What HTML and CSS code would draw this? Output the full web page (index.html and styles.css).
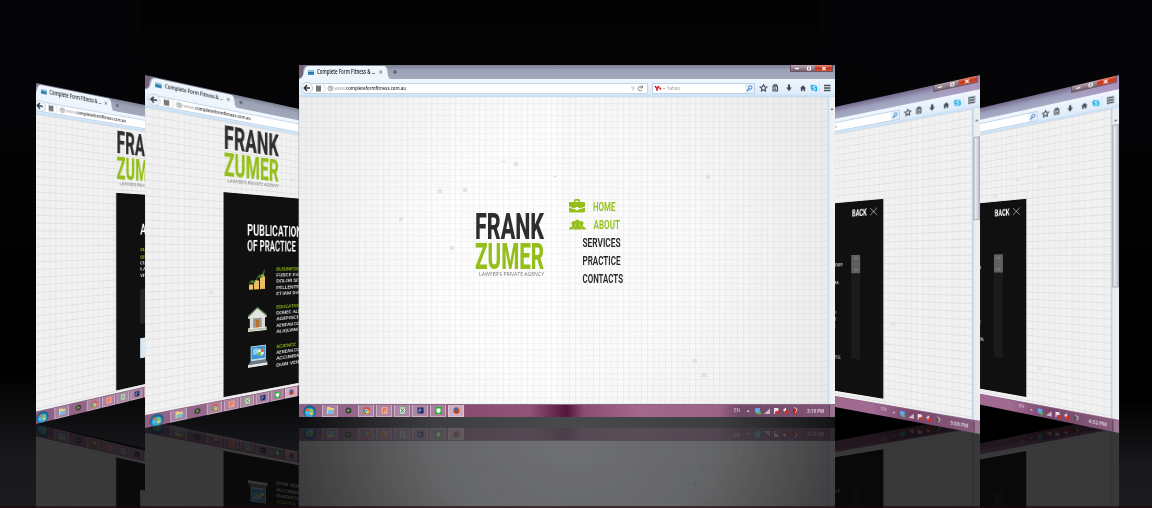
FILE: index.html
```html
<!DOCTYPE html>
<html lang="en">
<head>
<meta charset="utf-8">
<title>Frank Zumer</title>
<link rel="stylesheet" href="styles.css">
</head>
<body>
<main class="stage">
  <svg class="floor" width="1152" height="508" viewBox="0 0 1152 508" aria-hidden="true">
    <defs>
      <radialGradient id="glow" gradientUnits="userSpaceOnUse" cx="0" cy="0" r="1" gradientTransform="translate(575 440) scale(285 210)">
        <stop offset="0" stop-color="#4a4b4e"/><stop offset=".5" stop-color="#3d3e40"/><stop offset="1" stop-color="#0b0b0d"/>
      </radialGradient>
      <linearGradient id="ground" x1="0" y1="0" x2="0" y2="1">
        <stop offset="0" stop-color="#000"/><stop offset=".6" stop-color="#17181a"/><stop offset="1" stop-color="#1b1b1d"/>
      </linearGradient>
    </defs>
    <path d="M0 130 L140 160 V0 H0Z" fill="#050507"/>
    <path d="M820 0 H1152 V146 H1119 L820 60Z" fill="#050507"/>
    <rect y="370" width="300" height="138" fill="url(#ground)"/>
    <rect x="1119" y="400" width="33" height="108" fill="url(#ground)"/>
    <path d="M36 424 L145 448 L299 453 V508 H36Z M145 424 L299 453 V508 H145Z" fill="#09090b"/>
    <path d="M835 450 L980 426 V508 H835Z M980 450 L1119 426 V508 H980Z" fill="#08080a"/>
    <rect x="299" y="400" width="536" height="108" fill="url(#glow)"/>
  </svg>
  <div class="sides">
    <div class="slot far-left" data-view="about"></div>
    <div class="slot near-left" data-view="publications"></div>
    <div class="slot far-right" data-view="back-far"></div>
    <div class="slot near-right" data-view="back-near"></div>
  </div>
  <div class="slot front" data-view="home"></div>
  <div class="baseline"></div>
</main>
<script src="main.js"></script>
</body>
</html>
```
FILE: styles.css
```css
* { box-sizing: border-box; }
body { margin: 0; overflow: hidden; background: #000; font-family: "Open Sans", "Liberation Sans", sans-serif; }
.stage { position: relative; width: 1152px; height: 508px; overflow: hidden; background: linear-gradient(#020203, #050507 60px, #000 330px, #000); }
.floor { position: absolute; left: 0; top: 0; }
.sides { position: absolute; left: 0; top: 0; width: 1152px; height: 424px; -webkit-box-reflect: below 0 linear-gradient(rgba(0,0,0,.21), rgba(0,0,0,.21)); }
.baseline { position: absolute; left: 0; right: 0; bottom: 0; height: 2px; background: rgba(30,5,12,.6); }

/* windows placed around the stage */
.slot { position: absolute; overflow: hidden; height: 352px; display: flex; }
.front { left: 299px; top: 65px; width: 536px; -webkit-box-reflect: below 11px linear-gradient(rgba(0,0,0,.2), rgba(0,0,0,.22)); }
.near-left { left: 145px; top: 75px; width: 167.3px; transform-origin: 0 0; transform: matrix3d(1.133,.25,0,.00138, 0,1.003,0,0, 0,0,1,0, 0,0,0,1); }
.far-left { left: 36px; top: 83px; width: 129.5px; transform-origin: 0 0; transform: matrix3d(.99,.2,0,.0013, 0,.969,0,0, 0,0,1,0, 0,0,0,1); }
.far-left .window { margin-left: -4px; }
.near-right { left: 822.2px; top: 75px; width: 157.8px; justify-content: flex-end; transform-origin: 100% 0; transform: matrix3d(1.1,-.243,0,-.00125, 0,1.02,0,0, 0,0,1,0, 0,0,0,1); }
.far-right { left: 970.4px; top: 74.5px; width: 148.6px; justify-content: flex-end; transform-origin: 100% 0; transform: matrix3d(1.13,-.27,0,-.0014, 0,1.017,0,0, 0,0,1,0, 0,0,0,1); }

.window { flex: none; width: 536px; height: 352px; display: flex; flex-direction: column; background: #eee; }

/* title bar */
.tabs { height: 14px; flex: none; display: flex; align-items: flex-start; justify-content: space-between; background: linear-gradient(#7d8194, #9ca2b5 5px, #a3a9bb); }
.near-right .tabs, .far-right .tabs { background: linear-gradient(90deg, transparent 480px, rgba(176,140,190,.6) 525px), linear-gradient(#75698a, #9c9fbb 7px, #a9adc6); }
.tabs-left { display: flex; height: 14px; align-items: center; }
.tab { height: 14px; width: 91px; position: relative; display: flex; align-items: center; padding-left: 9px; }
.tab-shape { position: absolute; left: 0; top: 0; }
.tab-icon { position: relative; width: 6px; height: 5px; margin-right: 3px; background: linear-gradient(#8cc0dc 40%, #1e6c9c 40%, #4d9ac4); }
.tab svg.label { position: relative; }
.plus { margin-left: 1px; }
.controls { display: flex; height: 7px; margin-right: 2px; border: 1px solid #6a5560; border-top: 0; }
.control { width: 12px; background: linear-gradient(#b9a5b0, #776473); display: flex; align-items: center; justify-content: center; }
.control.close { width: 17px; background: linear-gradient(#e89078, #c5301c 50%, #d9502e); }

/* toolbar */
.toolbar { height: 18px; flex: none; display: flex; align-items: center; background: linear-gradient(#eff6fd, #e0edfa 14px, #c5ddf3); padding-left: 2px; }
.back { flex: none; width: 12px; height: 12px; border-radius: 50%; background: #f6fafd; border: 1px solid #bcd0e2; display: flex; align-items: center; justify-content: center; margin-right: -3px; z-index: 1; }
.url { width: 338px; height: 11px; background: #fff; border: 1px solid #c3d6e8; display: flex; align-items: center; justify-content: space-between; padding: 0 3px 0 4px; }
.url-left { display: flex; align-items: center; }
.search { width: 103px; height: 11px; margin-left: 4px; background: #fff; border: 1px solid #bcd2e8; display: flex; align-items: center; justify-content: space-between; padding-left: 1px; }
.glass { width: 9px; height: 9px; background: #e3effb; display: flex; align-items: center; justify-content: center; }

/* page body */
.view { flex: 1; display: flex; min-height: 0; }
.page { flex: 1; position: relative; overflow: hidden;
  background: linear-gradient(90deg, rgba(90,95,100,.05) 1px, transparent 1px) 0 0 / 6px 6px, linear-gradient(rgba(90,95,100,.05) 1px, transparent 1px) 0 0 / 6px 6px, radial-gradient(circle at 50% 52%, #fff 0, #fcfcfc 130px, #eaeaea 330px); }
.near-left .page, .far-left .page, .near-right .page, .far-right .page {
  background: linear-gradient(90deg, rgba(70,75,80,.045) 1px, transparent 1px) 0 0 / 6px 7px, linear-gradient(rgba(70,75,80,.09) 1px, transparent 1px) 0 0 / 6px 8px, #f1f1f2; }
.canvas { display: block; }
.scroll { width: 7px; background: #ecedef; border-left: 1px solid #a9cfe6; display: flex; flex-direction: column; align-items: center; }
.scroll-thumb { width: 6px; border: 1px solid #adafb9; background: linear-gradient(90deg, #f3f3f6, #c5c6d0); }
.scroll-gap { width: 6px; height: 16px; }
.scroll-near { height: 82px; margin-top: 12px; }
.scroll-far { height: 161px; }
.front .scroll { border-color: #c8dcec; background: linear-gradient(90deg, #dfeffa, #f1f1f2 3px); }

/* taskbar */
.taskbar { height: 13px; flex: none; display: flex; align-items: center; justify-content: space-between; background: linear-gradient(90deg, #8d6285, #9d6e90 120px, #8a4d70 170px, #915377 230px, #55163d 268px, #8c4c73 285px, #a3688c 340px, #9b6287 420px, #704a69 440px, #825577 100%); border-top: 1px solid #8d6886; }
.near-right .taskbar, .far-right .taskbar { background: linear-gradient(90deg, #a16a91 425px, #79476b 470px, #875d80); }
.apps { display: flex; height: 12px; align-items: center; gap: 2px; padding-left: 3px; }
.orb { margin-right: 3px; }
.app { width: 16px; height: 12px; border: 1px solid rgba(235,215,232,.5); border-top: 0; background: rgba(205,175,200,.38); display: flex; align-items: center; justify-content: center; }
.app.plain { background: none; border-color: transparent; }
.app.active { background: rgba(240,220,235,.65); }
```
FILE: main.js
```js
// Condensed lettering: squeezes a word into a fixed width.
function word(x, y, w, size, fill, text, weight = 700, family = 'Roboto, sans-serif') {
  return `<text x="${x}" y="${y}" font-family="${family}" font-size="${size}" font-weight="${weight}" fill="${fill}" textLength="${w}" lengthAdjust="spacingAndGlyphs">${text}</text>`;
}
const sans = '"Open Sans", sans-serif'.replace(/"/g, "'");

function logo(x, y, w) {
  return word(x, y + 25.3, w, 36.5, '#2e2e2e', 'FRANK', 800) +
    word(x, y + 55.5, w, 36.5, '#94bf1a', 'ZUMER', 800) +
    word(x + 4, y + 62.5, w - 4, 5.800, '#77797a', 'LAWYER’S PRIVATE AGENCY', 400, sans);
}

function squares(list) {
  return list.map(([x, y]) => `<rect x="${x}" y="${y}" width="4" height="4" fill="#e2e3e4"/>`).join('');
}

function column(x, y, lines) {
  return lines.map((t, i) => word(x, y + i * 7.2, t.length * 3.6, 5.6, i ? '#e8e8e8' : '#94bf1a', t, 500)).join('');
}

const money = `<g transform="translate(104 160)"><path d="M1 21h5v6H1zM7 17h6v10H7zM14 12h6v15h-6z" fill="#e5b04f"/><path d="M1 23h5M1 25h5M7 19h6M7 22h6M7 25h6M14 15h6M14 18h6M14 21h6M14 24h6" stroke="#f8e3a0" stroke-width=".8"/><path d="M0 20l4-4 4 1 5-7 3 1 4-8-1 8-4 3-3-1-5 7-4-1z" fill="#3f7d24"/><path d="M8 17h4M15 11h4" stroke="#f7e8a8"/></g>`;
const bank = `<g transform="translate(104 208)"><path d="M11 0L0 9v3h22V9z" fill="#e4e4e0"/><path d="M0 10L11 0l11 10" fill="none" stroke="#5d8a44" stroke-width="1.2"/><path d="M2 12h4v11H2zM16 12h4v11h-4z" fill="#d9d9d6"/><path d="M6 12h10v11H6z" fill="#999"/><path d="M9 14h4v9H9z" fill="#b5732a"/><path d="M0 23h22v4H0z" fill="#f0f0ee"/><path d="M0 25h22" stroke="#799b68"/></g>`;
const laptop = `<g transform="translate(103 251)"><path d="M4 1h18v17H4z" fill="#bcd7ea"/><path d="M5 2h16v14H5z" fill="#3e95d2"/><path d="M7 4h6v7H7z" fill="#8bd0f1"/><circle cx="16" cy="9" r="4" fill="#e8ecd6"/><path d="M16 5a4 4 0 0 1 4 4h-4z" fill="#dc6132"/><path d="M12 9h4v4a4 4 0 0 1-4-4z" fill="#72b93f"/><path d="M4 18h18l2 4H1z" fill="#6d7780"/><path d="M1 22h23v3H1z" fill="#e2e4e5"/></g>`;

function backPanel(right, top) {
  const r = 534 - right;
  return `<rect x="0" y="${top}" width="${r + 7}" height="220" fill="#101010"/>
    <path d="M${r + 7.5} ${top}v220" stroke="#aaa"/>
    ${word(r - 30, top + 17.5, 18, 10, '#fff', 'BACK', 700)}
    <path d="M${r - 8} ${top + 9}l8 8m0-8l-8 8" stroke="#c8c8c8" stroke-width=".8"/>
    <rect x="${r - 31}" y="${top + 61}" width="11" height="119" fill="#1b1b1b"/>
    <rect x="${r - 31}" y="${top + 61}" width="11" height="21" fill="#606060"/>
    <path d="M${r - 28} ${top + 66}l2.500-2 2.500 2M${r - 28} ${top + 77}l2.500 2 2.500-2" fill="none" stroke="#aaa" stroke-width=".7"/>`;
}

const bodies = {
  home: `
    ${squares([[215,65],[407,78],[139,92],[164,91],[100,120],[151,149],[394,262],[403,276]])}
    <path d="M202 64h5v1h-5zM254 79h4v1h-4z" fill="#ddd"/>
    <path d="M262 0h267v307H262z" fill="#777" opacity=".025"/>
    ${logo(176, 116.5, 69)}
    <g fill="#94bf1a">
      <path d="M271 105h4v-1.500q0-1.500 1.500-1.500h3q1.500 0 1.500 1.500v1.500h4q1 0 1 1v3.500q-3.500 1.600-6.500 1.800v-1.300h-3v1.300q-3-.2-6.500-1.800v-3.500q0-1 1-1zm5.500 0h3v-1.300h-3zM270 110.500q3.500 1.600 6.500 1.800v1h3v-1q3-.2 6.500-1.800v4.100q0 .9-1 .9h-14q-1 0-1-.9z"/>
      <path d="M270 132.500q0-2.300 3-3 .6-.4.2-1.200-1-1.300-.7-2.700.4-1.700 2-1.700 1.200 0 1.700.9-.7 2.300.6 4.200l-.3.700q-2.800.6-3.300 2.800zM287 132.500q0-2.300-3-3-.6-.4-.2-1.200 1-1.300.7-2.700-.4-1.700-2-1.700-1.200 0-1.700.9.7 2.300-.6 4.200l.3.700q2.800.6 3.300 2.800zM273.800 132.500q.2-2.200 3-2.700.6-.4.2-1.400-1.300-1.500-1.100-3.300.3-2.600 2.600-2.600t2.600 2.600q.2 1.800-1.100 3.300-.4 1 .2 1.400 2.800.5 3 2.700z"/>
    </g>
    ${word(294, 114.2, 22.500, 12.900, '#94bf1a', 'HOME', 600)}
    ${word(294.500, 132.200, 26.500, 12.900, '#94bf1a', 'ABOUT', 600)}
    ${word(283.500, 150.200, 38, 12.900, '#242424', 'SERVICES', 600)}
    ${word(283.500, 168.200, 38, 12.900, '#242424', 'PRACTICE', 600)}
    ${word(283.500, 186.200, 40.500, 12.900, '#242424', 'CONTACTS', 600)}`,
  publications: `
    ${squares([[61,186],[156,54]])}
    ${logo(77, 5, 64)}
    <rect x="77" y="78" width="460" height="226" fill="#101010"/><path d="M76.500 78v226" stroke="#999"/>
    ${word(103, 125, 75, 18.500, '#fff', 'PUBLICATIONS', 600)}
    ${word(103, 143, 60, 18.500, '#fff', 'OF PRACTICE', 600)}
    ${money}${bank}${laptop}
    ${column(138, 166, ['BUSINESS','FUSCE EUISMOD C','DOLOR SIT AMET','PELLENTESQUE A','ETIAM DIAM ARCU'])}
    ${column(138, 211, ['EDUCATION','DONEC ALIQUAM','ADIPISCING ELIT','AENEAN COMMODO','ALIQUAM NIBH EU'])}
    ${column(138, 258, ['SCIENCE','AENEAN COMMODO','ACCUMSAN, RISUS','DIAM VENENATIS'])}`,
  about: `
    ${logo(95, 5, 64)}
    <rect x="95" y="76" width="460" height="228" fill="#101010"/><path d="M94.500 76v228" stroke="#777"/>
    ${word(126, 124, 40, 18.500, '#fff', 'ABOUT', 600)}
    ${column(126, 144, ['SUSPENDISSE'])}${column(126, 153, ['SEMPER','CURABITUR','LACINIA','VIVAMUS'])}
    <rect x="126" y="189" width="40" height="42" rx="3" fill="#262626"/>
    <rect x="126" y="248" width="30" height="24" fill="#d9e8f1"/>`,
  'back-near': `
    ${backPanel(104, 81)}${squares([[446,216]])}
    ${word(373, 155, 15, 5.500, '#ddd', 'ALIQUIP', 500)}
    ${word(373, 176, 10, 5.500, '#ddd', 'URNA', 500)}
    ${word(371, 211, 9, 5.500, '#ddd', 'NIBH', 500)}${word(371, 219, 9, 5.500, '#ddd', 'ELIT', 500)}${word(371, 227, 8, 5.500, '#ddd', 'NEC', 500)}
    ${word(372, 263, 14, 5.500, '#ddd', 'ARCU.', 500)}`,
  'back-far': `
    ${backPanel(98, 81)}${squares([[456,46],[431,56],[405,73],[456,265]])}
    ${word(382, 159, 7, 5.500, '#ddd', 'IN', 500)}${word(382, 224, 7, 5.500, '#ddd', 'AC', 500)}${word(382, 244, 11, 5.500, '#ddd', 'NON.', 500)}`
};

const chromeIcons = `
  <svg width="76" height="14" viewBox="0 0 76 14" style="margin-left:4px">
    <g fill="none" stroke="#454b57" stroke-width="1.100">
      <path d="M4.500 3.700l1 2.100 2.300.3-1.700 1.600.4 2.300-2-1.100-2 1.100.4-2.300L1.200 6.100l2.300-.3z"/>
      <path d="M14 5.200h4.500v4.800H14zM15 5.200V3.900h2.500v1.300M15.200 7h2M15.200 8.500h2"/>
    </g>
    <path d="M28.900 3.500h2.200v3h1.700L30 10.200l-2.800-3.700h1.700zM41 7.300l3-3 3 3h-.9v3h-1.500V8.500h-1.200v1.800h-1.500v-3z" fill="#454b57"/>
    <circle cx="55" cy="7" r="3.100" fill="#19aee8"/><circle cx="53.300" cy="5.200" r="1.700" fill="#19aee8"/><circle cx="56.700" cy="8.800" r="1.700" fill="#19aee8"/>
    <path d="M56.500 5.400q-3-1-3 .4c0 1.300 3 .8 3 2.300 0 1.200-2 1.200-3.200.5" fill="none" stroke="#fff" stroke-width=".9"/>
    <path d="M60.500 1v12" stroke="#d0dce8" stroke-width=".6"/>
    <path d="M65 4.500h6.500M65 7h6.500M65 9.500h6.500" stroke="#4a505a" stroke-width="1.400"/>
  </svg>`;

const apps = [
  ['', '<path d="M2 2h3l1 1h3v6H2z" fill="#ecd27c"/><path d="M3 5h6v4H3z" fill="#77bdd9"/>'],
  ['plain', '<circle cx="5.500" cy="5.500" r="3" fill="#3a3f38"/><path d="M4.500 4l2.500 1.500L4.500 7z" fill="#7fdc3d"/>'],
  ['', '<circle cx="5.500" cy="5.500" r="3.300" fill="#e0432f"/><path d="M5.500 5.500L2.600 4A3.300 3.300 0 0 0 5 8.800z" fill="#3fa648"/><path d="M5.500 5.500h3.300A3.300 3.300 0 0 1 5 8.800z" fill="#f3c62f"/><circle cx="5.500" cy="5.500" r="1.400" fill="#4a86dc" stroke="#fff" stroke-width=".6"/>'],
  ['', '<path d="M2.500 2h6v7h-6z" fill="#f4a58f"/><path d="M4.500 8V3.500h2v2h-2" fill="none" stroke="#e2674c"/>'],
  ['', '<path d="M2.500 2h6v7h-6z" fill="#d5e5d6"/><path d="M4 3.500l3 4M7 3.500l-3 4" stroke="#3a7c44"/><path d="M2.500 2h6v7h-6z" fill="none" stroke="#6aa26d" stroke-width=".7"/>'],
  ['', '<path d="M2.500 2.500h6v6h-6z" fill="#17225f"/><path d="M4 8V4h2v2H4" fill="none" stroke="#8fb0de" stroke-width=".8"/>'],
  ['', '<rect x="2" y="2" width="7" height="7" rx="1" fill="#12b924"/><path d="M3.500 3.500h4v3l-2 2-2-2z" fill="#fff"/>'],
  ['active', '<circle cx="5.500" cy="5.500" r="3.300" fill="#e0681f"/><circle cx="5" cy="4.600" r="2" fill="#3565ac"/><path d="M3 6q3 2 5-1-.5 4-3 3.500Q3 8 3 6z" fill="#b8302a"/>']
].map(([c, g]) => `<span class="app ${c}"><svg width="11" height="11" viewBox="0 0 11 11">${g}</svg></span>`).join('');

function shell(view, clock) {
  const scroll = view === 'back-near' ? 'scroll-near' : view === 'back-far' ? 'scroll-far' : '';
  return `<div class="window">
    <div class="tabs">
      <div class="tabs-left">
        <div class="tab">
          <svg class="tab-shape" width="91" height="14" viewBox="0 0 91 14"><path d="M0 0h6Q4 3 4 8t-4 6z" fill="#77647e"/><path d="M0 14Q4 13 5 7T9 1H85q3 0 3.500 6T91 14z" fill="#eef5fc"/></svg>
          <span class="tab-icon"></span>
          <svg class="label" width="74" height="12" viewBox="0 0 74 12">${word(0, 8, 59, 6.300, '#24272e', 'Complete Form Fitness &amp; ...', 600, sans)}<path d="M63 4.500l3 3m0-3l-3 3" stroke="#555" stroke-width=".8"/></svg>
        </div>
        <svg class="plus" width="8" height="8" viewBox="0 0 8 8"><path d="M2 4h4M4 2v4" stroke="#4c5160" stroke-width="1"/></svg>
      </div>
      <div class="controls">
        <span class="control"><svg width="6" height="4"><path d="M1 2.500h4" stroke="#fff" stroke-width="1.300"/></svg></span>
        <span class="control"><svg width="6" height="5"><path d="M1.500 1h3v3h-3z" fill="none" stroke="#fff"/></svg></span>
        <span class="control close"><svg width="6" height="5"><path d="M1.300.8l3.400 3.400m0-3.400L1.300 4.200" stroke="#fff" stroke-width="1.100"/></svg></span>
      </div>
    </div>
    <div class="toolbar">
      <span class="back"><svg width="8" height="8" viewBox="0 0 8 8"><path d="M7 4H1.500M4 1L1.200 4 4 7" fill="none" stroke="#313a48" stroke-width="1.500"/></svg></span>
      <div class="url">
        <div class="url-left">
          <svg width="98" height="9" viewBox="0 0 98 9"><path d="M1 2h5v5.500H1z" fill="#777"/><path d="M2 .8v2M5 .8v2" stroke="#777"/><path d="M8.500 0l2 4.500-2 4.500" fill="none" stroke="#ccc" stroke-width=".7"/><circle cx="15.500" cy="4.500" r="2.500" fill="#e4e4e4" stroke="#999" stroke-width=".8"/><path d="M14.300 3.300l2.400.7-1.500 1.800" fill="none" stroke="#999" stroke-width=".8"/>${word(19.500, 6.300, 11.500, 5.600, '#999', 'www.', 400, sans)}${word(31, 6.300, 60, 5.600, '#333', 'completeformfitness.com.au', 600, sans)}</svg>
        </div>
        <svg width="14" height="9" viewBox="0 0 14 9"><path d="M1.500 3h3L3 6z" fill="none" stroke="#bbb" stroke-width=".7"/><path d="M12 3.200A2.200 2.200 0 1 0 12 6M12.500 1.500v2.300h-2.300" fill="none" stroke="#777" stroke-width=".9"/></svg>
      </div>
      <div class="search">
        <svg width="34" height="9" viewBox="0 0 34 9"><path d="M1 2l2 2.800V7M5 2L3 4.800M5.500 3.500l1.500 2" fill="none" stroke="#d6202b" stroke-width="1.500"/><path d="M9 4h2l-1 1.500z" fill="#888"/>${word(13, 6.300, 13, 5.600, '#8c8c8c', 'Yahoo', 400, sans)}</svg>
        <span class="glass"><svg width="7" height="7" viewBox="0 0 7 7"><circle cx="4.200" cy="2.600" r="1.700" fill="none" stroke="#3579b8" stroke-width=".9"/><path d="M3 4L1 6" stroke="#3579b8" stroke-width="1.100"/></svg></span>
      </div>
      ${chromeIcons}
    </div>
    <div class="view">
      <div class="page"><svg class="canvas" width="529" height="307" viewBox="0 0 529 307">${bodies[view]}</svg></div>
      <div class="scroll"><div class="scroll-gap"><svg width="6" height="10"><path d="M1.500 6L3 4l1.500 2z" fill="#667"/></svg></div>${scroll ? `<div class="scroll-thumb ${scroll}"></div>` : ''}</div>
    </div>
    <div class="taskbar">
      <div class="apps">
        <svg class="orb" width="15" height="13" viewBox="0 0 15 13"><circle cx="7.500" cy="6.500" r="6.300" fill="#176291"/><circle cx="7.500" cy="7.500" r="4.800" fill="#34a6d5"/><path d="M4 4q1.500-1 3 0v2.300q-1.500-1-3 0z" fill="#ee7233"/><path d="M7.800 4q1.500 1 3 0v2.300q-1.500 1-3 0z" fill="#99cf45"/><path d="M4 7q1.500-1 3 0v2.300q-1.500-1-3 0z" fill="#5cbcf2"/><path d="M7.800 7q1.500 1 3 0v2.300q-1.500 1-3 0z" fill="#fbd64b"/></svg>
        ${apps}
      </div>
      <svg width="101" height="12" viewBox="0 0 101 12">
        ${word(0, 6.500, 6, 5.800, '#dfcfdc', 'EN', 400, sans)}
        <path d="M13 6.800l1.200-1.800 1.200 1.800z" fill="#fff"/>
        <path d="M21 3h5v4l-2.500 2L21 7z" fill="#58a9e6"/><circle cx="25.500" cy="8" r="1.500" fill="#51bd38"/>
        <path d="M30 9h6V3.500z" fill="#c9bcc8"/>
        <path d="M40.500 3v6M41 3.500h3v2.500h-3" stroke="#fff" stroke-width=".8" fill="#ddd"/><circle cx="44" cy="7.300" r="1.800" fill="#d92b22"/>
        <path d="M49 5l3-2.500v6z" fill="#eee"/><circle cx="52.500" cy="7" r="2" fill="#db2b20"/>
        <path d="M59 3.500h4v5h-4z" fill="${view === 'home' ? '#b72020' : '#555'}"/><path d="M60 2.500l3 1.500-1.500 4" stroke="#eee" fill="none" stroke-width=".8"/>
        ${word(73, 8, 17, 6, '#fff', clock, 400, sans)}
        <path d="M95.500 0v12" stroke="#614058"/><path d="M96 0h5v12h-5z" fill="#fff" opacity=".18"/>
      </svg>
    </div>
  </div>`;
}

const clocks = { home: '3:19 PM', 'back-near': '3:08 PM', 'back-far': '4:32 PM' };
document.querySelectorAll('.slot').forEach(el => {
  const v = el.dataset.view;
  el.innerHTML = shell(v, clocks[v] || '3:08 PM');
});
```
